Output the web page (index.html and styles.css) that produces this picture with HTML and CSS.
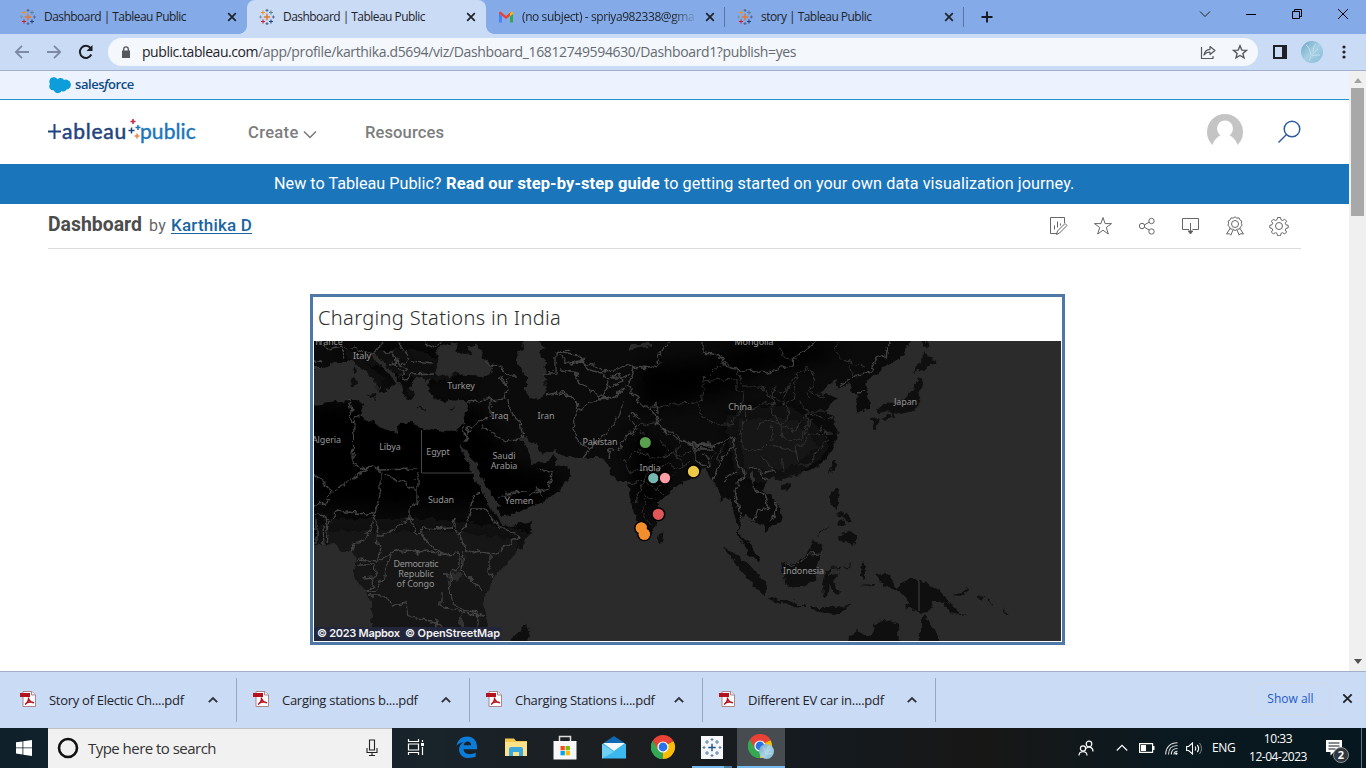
FILE: index.html
```
<!DOCTYPE html>
<html lang="en">
<head>
<meta charset="utf-8">
<title>Dashboard | Tableau Public</title>
<link rel="stylesheet" href="styles.css">
</head>
<body>
<svg class="defs" width="0" height="0">
  <defs>
    <symbol id="tableau" viewBox="0 0 16 16">
      <g fill="none" stroke-width="1.1">
        <path stroke="#e8762d" stroke-width="1.5" d="M8 4.8v6.4M4.8 8h6.4"/>
        <path stroke="#eb912c" d="M4 1.5v4M2 3.5h4"/>
        <path stroke="#59879b" d="M12 1.5v4M10 3.5h4"/>
        <path stroke="#c72035" d="M4 10.5v4M2 12.5h4"/>
        <path stroke="#1f457e" d="M12 10.5v4M10 12.5h4"/>
        <path stroke="#5b6591" d="M8 0v2.8M6.6 1.4h2.8M8 13.2V16M6.6 14.6h2.8M14.4 6.6v2.8M13 8h2.8"/>
        <path stroke="#7099a6" d="M1.5 6.6v2.8M.2 8H3"/>
      </g>
    </symbol>
    <symbol id="cross" viewBox="0 0 10 10"><path d="M1.2 1.2l7.6 7.6M8.8 1.2L1.2 8.8" fill="none" stroke="#1f2328" stroke-width="1.7"/></symbol>
    <symbol id="up" viewBox="0 0 12 8"><path d="M1.8 6.2L6 2l4.200 4.200" fill="none" stroke="#30343a" stroke-width="1.9"/></symbol>
    <symbol id="pdf" viewBox="0 0 16 16">
      <path d="M3 .5h9L15.500 4v11.500H3z" fill="#fff" stroke="#a8868a"/>
      <path d="M11.500.5V4h4" fill="#eee" stroke="#a8868a"/>
      <path d="M0 2h10v4H0z" fill="#b5121f"/>
      <path d="M8.500 6.500c.3 3-1.200 5.500-3.500 7M8.500 7.500c1 2.500 3 4 5.500 4.300M6.500 11.700c2-.8 4-1 6.500-.4" fill="none" stroke="#b5121f" stroke-width="1.400"/>
    </symbol>
    <symbol id="chrome" viewBox="0 0 24 24">
      <path d="M12 12L1.600 6A12 12 0 0 1 22.400 6z" fill="#ea4335"/>
      <path d="M12 12L1.600 6A12 12 0 0 0 12 24z" fill="#34a853"/>
      <path d="M12 12L22.400 6A12 12 0 0 1 12 24z" fill="#fbbc05"/>
      <path d="M12 6.500h10.700L22.400 6H12zM7.200 14.800L1.600 6l5.100 3z" fill="#ea4335"/>
      <path d="M16.800 14.800L12 24l-1.500-.1 1.800-6.400z" fill="#fbbc05"/>
      <path d="M1.600 6l5.200 9 5.200 2.500L12 24A12 12 0 0 1 1.600 6z" fill="#34a853"/>
      <circle cx="12" cy="12" r="5.600" fill="#fff"/><circle cx="12" cy="12" r="4.400" fill="#2b72e6"/>
    </symbol>
    <linearGradient id="ice" x1="0" y1="0" x2="1" y2="1"><stop offset="0" stop-color="#6da5c5"/><stop offset=".5" stop-color="#a5cfe2"/><stop offset="1" stop-color="#86bdd8"/></linearGradient>
    <symbol id="avatar" viewBox="0 0 22 22"><circle cx="11" cy="11" r="11" fill="url(#ice)"/><path d="M8 20c2-6 4-8 9-12M10 14C9 9 8 6 5 4M12 11c0-4 1-6 3-8M11 15c3-1 5-1 8-1" fill="none" stroke="#c3e1ee" stroke-width="1"/></symbol>
  </defs>
</svg>

<header class="tabs">
  <div class="tab"><svg class="fav"><use href="#tableau"/></svg><span class="tab-title">Dashboard | Tableau Public</span><svg class="close"><use href="#cross"/></svg></div>
  <div class="tab active"><svg class="fav"><use href="#tableau"/></svg><span class="tab-title">Dashboard | Tableau Public</span><svg class="close"><use href="#cross"/></svg></div>
  <div class="tab sep"><svg class="fav" viewBox="0 0 16 16"><path d="M1 3.500v10h3V6.500z" fill="#4285f4"/><path d="M12 6.500v7h3v-10z" fill="#34a853"/><path d="M1 3.500L2.500 2.500 8 7l5.500-4.500L12 6.800 8 10 1 4.500z" fill="#ea4335"/><path d="M12 4l2-1.500 1 1V5l-3 2.300z" fill="#fbbc04"/></svg><span class="tab-title mail">(no subject) - spriya982338@gma</span><svg class="close"><use href="#cross"/></svg></div>
  <div class="tab sep"><svg class="fav"><use href="#tableau"/></svg><span class="tab-title">story | Tableau Public</span><svg class="close"><use href="#cross"/></svg></div>
  <svg class="plus" viewBox="0 0 12 12"><path d="M6 .5v11M.5 6h11" stroke="#16191d" stroke-width="1.900"/></svg>
  <div class="win">
    <svg viewBox="0 0 12 12"><path d="M1 3.500L6 8.500l5-5" fill="none" stroke="#222"/></svg>
    <svg viewBox="0 0 12 12"><path d="M1 6.500h10" stroke="#000"/></svg>
    <svg viewBox="0 0 12 12"><path d="M1.500 3.500h7v7h-7zM3.500 3.500v-2h7v7h-2" fill="none" stroke="#000"/></svg>
    <svg viewBox="0 0 12 12"><path d="M1 1l10 10M11 1L1 11" stroke="#000"/></svg>
  </div>
</header>

<div class="toolbar">
  <svg class="nav" viewBox="0 0 16 16"><path d="M15 8H2M8 1.800L1.800 8 8 14.200" fill="none" stroke="#7c8aa3" stroke-width="1.800"/></svg>
  <svg class="nav" viewBox="0 0 16 16"><path d="M1 8h13M8 1.800L14.200 8 8 14.200" fill="none" stroke="#7c8aa3" stroke-width="1.800"/></svg>
  <svg class="nav" viewBox="0 0 16 16"><path d="M13.300 10.500A6 6 0 1 1 12.500 4" fill="none" stroke="#1b1e22" stroke-width="2"/><path d="M14.500 1v6h-6z" fill="#1b1e22"/></svg>
  <div class="omnibox">
    <svg class="lock" viewBox="0 0 10 12"><path d="M1 4.500h8V12H1z" fill="#55585c"/><path d="M2.700 5V3.200a2.300 2.300 0 0 1 4.600 0V5" fill="none" stroke="#55585c" stroke-width="1.300"/></svg>
    <span class="url"><b>public.tableau.com</b>/app/profile/karthika.d5694/viz/Dashboard_16812749594630/Dashboard1?publish=yes</span>
    <svg class="act" viewBox="0 0 16 16"><path d="M1.500 3v11.500H13V12" fill="none" stroke="#55585c" stroke-width="1.200"/><path d="M4 11c.5-4 3-5.500 6-5.700V2.500L15 6.500l-5 4V8C7.500 8 5.500 9 4 11z" fill="none" stroke="#55585c" stroke-width="1.200" stroke-linejoin="round"/></svg>
    <svg class="act" viewBox="0 0 16 16"><path d="M8 1.800l1.800 4.300 4.600.3-3.500 3 1.100 4.500L8 11.500l-4 2.400 1.100-4.500-3.500-3 4.600-.3z" fill="none" stroke="#55585c" stroke-width="1.400"/></svg>
  </div>
  <svg class="panel" viewBox="0 0 14 14"><path d="M1 1h12v12H1z" fill="none" stroke="#202124" stroke-width="2"/><path d="M9 0h5v14H9z" fill="#202124"/></svg>
  <svg class="me"><use href="#avatar"/></svg>
  <svg class="dots" viewBox="0 0 4 14"><path d="M2 2h0M2 7h0M2 12h0" stroke="#202124" stroke-width="3.200" stroke-linecap="round"/></svg>
</div>

<div class="view">
<main class="page">
  <div class="sf">
    <svg class="cloud" viewBox="0 0 24 16"><path d="M9.500 2.200A4.300 4.300 0 0 1 16 3a5 5 0 1 1 2.500 9.600 3.800 3.800 0 0 1-5 1.300 4.200 4.200 0 0 1-7.700-.6A4 4 0 0 1 2 7 4.300 4.300 0 0 1 9.500 2.200z" fill="#0d9dda"/></svg>
    <span>sales<i>f</i>orce</span>
  </div>
  <nav class="top">
    <div class="logo"><span class="w1"><svg class="tee" viewBox="0 0 14 18"><path d="M6.500 2v15M0 9.500h13" stroke="#1f447e" stroke-width="2"/></svg>ableau</span><svg class="plusses" viewBox="0 0 16 26"><path d="M7 1v5M4.500 3.500h5" stroke="#c8243b" stroke-width="1.500"/><path d="M12 7v5M9.500 9.500h5" stroke="#1b75bb" stroke-width="1.500"/><path d="M5.500 9.500v6M2.500 12.500h6" stroke="#1f447e" stroke-width="1.500"/><path d="M11 15.500v5M8.500 18h5" stroke="#e8894b" stroke-width="1.500"/></svg><span class="w2">public</span></div>
    <span class="link create">Create</span><svg class="caret" viewBox="0 0 14 9"><path d="M1 1.500l6 6 6-6" fill="none" stroke="#777" stroke-width="1.500"/></svg>
    <span class="link res">Resources</span>
    <svg class="person" viewBox="0 0 36 36"><clipPath id="pc"><path d="M0 0h36v31H0z"/></clipPath><circle cx="18" cy="18" r="18" fill="#c4c4c4" clip-path="url(#pc)"/><circle cx="18" cy="14.500" r="8" fill="#fff"/><path d="M5 32c2-6 5-9 9-11h8c4 2 7 5 9 11z" fill="#fff"/></svg>
    <svg class="search" viewBox="0 0 24 24"><circle cx="15" cy="9" r="7.800" fill="none" stroke="#2f5c9e" stroke-width="1.500"/><path d="M9.500 14.500L1.500 22.500" stroke="#2f5c9e" stroke-width="1.500"/></svg>
  </nav>
  <div class="banner"><span class="b1">New to Tableau Public?</span><b>Read our step-by-step guide</b><span class="b2">to getting started on your own data visualization journey.</span></div>
  <div class="titlebar">
    <h1>Dashboard</h1><span class="by">by</span><a>Karthika D</a>
    <div class="icons">
      <svg viewBox="0 0 20 20"><path d="M8 17.500H1.500v-16h14V7M5.500 13.500v-4M8.500 11.500v-6M11.500 9.500v-2M7.500 18.500l1-3.500L16 7.500l2 2L10.500 17z"/></svg>
      <svg viewBox="0 0 20 20"><path d="M10 1.500l2.100 6.100h6.400l-5.200 3.900 2 6.500L10 14.200 4.700 18l2-6.500-5.200-3.900h6.400z"/></svg>
      <svg viewBox="0 0 20 20"><circle cx="5" cy="10" r="2.700"/><circle cx="14.500" cy="5" r="2.700"/><circle cx="14.500" cy="15.500" r="2.700"/><path d="M7.500 8.800l4.700-2.600M7.500 11.300l4.700 2.800"/></svg>
      <svg viewBox="0 0 20 20"><path d="M8 13.500H1.500v-11h16v11h-6M9.500 7v10"/><path d="M7.200 15h4.600L9.500 18z" fill="#555"/></svg>
      <svg viewBox="0 0 20 20"><circle cx="10" cy="8" r="3.500"/><path d="M10 .8l1.800 1.300 2.200-.2.900 2 1.900 1.200-.4 2.200.7 2.100-1.700 1.500-.7 2.100-2.200.2L10 14.500l-2.500-1.300-2.200-.2-.7-2.100-1.700-1.500.7-2.100-.4-2.200 1.900-1.200.9-2 2.200.2zM5 12.500L1.500 18l3-.3 1.300 1.500L8 14M15 12.500l3.500 5.500-3-.3-1.300 1.500L12 14"/></svg>
      <svg viewBox="0 0 20 20"><circle cx="10" cy="10" r="3.500"/><path d="M8.500 1.500h3l.5 2.300 1.600.7 2-1.300 2 2-1.300 2 .7 1.600 2.200.5v2.600l-2.200.5-.7 1.600 1.300 2-2 2-2-1.300-1.600.7-.5 2.300h-3L8 17.400l-1.600-.7-2 1.300-2-2 1.300-2L3 12.400l-2.200-.5V9.300L3 8.800l.7-1.600-1.300-2 2-2 2 1.300L8 3.800z"/></svg>
    </div>
  </div>

  <section class="viz">
    <h2>Charging Stations in India</h2>
    <svg class="map" viewBox="314 341 747 300">
      <defs><filter id="soft" x="-30%" y="-30%" width="160%" height="160%"><feGaussianBlur stdDeviation="9"/></filter>
      <filter id="rough" filterUnits="userSpaceOnUse" x="300" y="325" width="780" height="335" color-interpolation-filters="sRGB"><feTurbulence type="fractalNoise" baseFrequency=".13" numOctaves="3" seed="4" result="n"/><feDisplacementMap in="SourceGraphic" in2="n" scale="8" xChannelSelector="R" yChannelSelector="G"/></filter>
      <path id="mainland" d="M300 325H915L909 341 905 352 893 364 882 367 878 372 869 378 865 384 868 393 869 408 857 413 856 404 858 396 852 393 851 387 847 384 838 389 835 383 837 379 833 380 823 391 819 393 823 396 828 393 838 399 831 403 825 410 831 415 837 427 838 437 833 447 827 458 817 467 807 472 790 477 783 480 768 477 764 483 763 491 771 496 777 503 783 517 779 523 770 528 764 533 764 526 757 523 753 521 752 516 745 514 740 520 738 531 743 540 753 547 760 562 757 563 752 558 747 554 744 543 737 535 737 520 735 513 731 499 726 498 720 501 719 492 714 482 709 475 703 467 698 473 692 478 685 482 673 490 663 498 658 503 658 512 655 527 648 535 642 527 635 513 630 497 627 482 620 483 612 474 608 465 600 458 578 458 560 456 556 449 543 454 538 445 530 442 527 436 521 439 529 455 532 463 548 462 554 455 558 465 569 469 571 476 560 491 545 500 517 512 502 517 497 504 487 488 476 462 466 450 461 446 462 439 459 449 453 437 458 447 466 458 473 477 479 485 490 507 500 522 505 526 533 521 531 530 524 544 510 561 496 574 490 585 482 603 488 617 485 660H370L370 641 373 617 372 603 362 588 353 573 356 560 352 551 342 551 336 544 300 545z"/>
      <clipPath id="land"><use href="#mainland"/></clipPath></defs>
      <path d="M314 341h748v301H314z" fill="#2b2b2b"/>
      <g filter="url(#rough)">
      <use href="#mainland" fill="#0b0b0b"/>
      <g clip-path="url(#land)"><g filter="url(#soft)">
        <path d="M300 405h174l40 60 50 10-30 40-60-10-90 5-84-5z" fill="#000"/>
        <path d="M640 365l80-5 60 0-60 35-80 15zM700 350l90-10 60 10-60 20z" fill="#000"/>
        <path d="M320 525l120 0 90 10-50 125H340z" fill="#131313"/>
        <path d="M730 415l60-5 40 35-40 30-50 0z" fill="#131313"/>
        <path d="M320 350h100l60 30h-60z" fill="#111"/>
        <path d="M630 430l40 20-10 60-25-10z" fill="#000"/>
      </g></g>
      <g fill="#2b2b2b">
        <path d="M300 375L322 367 335 363 345 363 353 358 359 361 366 373 377 381 381 388 378 392 384 394 387 388 396 384 393 378 386 371 378 364 370 353 374 352 382 361 398 377 402 390 407 400 412 397 409 388 415 378 421 377 432 380 427 385 429 393 436 399 443 402 450 401 458 400 465 400 467 406 464 421 460 429 450 432 430 429 420 427 412 423 400 424 396 433 382 427 366 420 360 411 363 404 357 400 347 400 330 403 300 406z"/>
        <path d="M439 363L436 355 442 345 452 341 458 344 456 350 464 356 472 352 468 347 478 343 478 348 484 357 491 364 493 372 485 376 468 375 455 374 440 377 434 371z"/>
        <path d="M522 341H542L545 349 539 352 540 358 546 361 545 378 546 391 540 400 531 398 526 391 526 377 519 366 517 356 523 349z"/>
        <path d="M448 574l11-3 3 5-6 6h-7zM630 345l10-1 12 0v2l-12 1-9 4z"/>
      </g>
      <g fill="#0f0f0f">
        <path d="M344 352h18l4 9 9 10 12 7-1 2-6-2 1 8-4 4-1-10-10-6-10-11-6-5zM366 395l11-1-2 5zM351 379l4-2 1 8-4 3zM353 369l2-2 1 6-3 1zM417 408l9 0v2l-9-1zM449 409l7-2-4 4zM407 388l7 2-2 7-5-4z"/>
        <path d="M527 623l-7 7-9 9-1 13h18l2-20zM658 533l4-2 3 6-1 6-5 1-2-4z"/>
        <path d="M923 352l6 6 9 4-8 2-5 7-7-1-4 5 2-10 6-2zM915 380l4-3 4 7-3 10-2 6 1 8-6 1-8 3-9 2-2 5-3-2 2-4-8-1-7 2-3-3 9-6 12-2 7-2 5-7 7-5zM872 418l7-1-1 5-2 7-3-1 1-6zM883 417l7-2-1 3-5 3zM923 341h6v4l-6 1zM782 485l8-2-2 6-6 2z"/>
        <path d="M833 462l4-3-1 7-4 6-2-4zM831 491l7-1 1 7-2 4v9l-3-1-4-9zM836 514l4-3 7 4 4 6-4 0-4-5zM837 522l6-3 3 6-2 4-6-2zM838 537l5-2 6-4 7 4v9l-5 1-5-4-7 1z"/>
        <path d="M723 548l7 1 12 11 12 10 10 12 3 4v9l-5-1-8-8-10-12zM768 597l12 3 11 0 9 5 6 0 0 2-14-1-13-3-9-2zM782 562l6 3 9-3 8-7 10-14 7 3 1 6-4 10-3 18-12 9-10 0-9-4zM826 569l5 0 17-2 3-3-1 4-20 2-1 5 10-1-6 7 7 12-2 2-9-11-3 13-3 0-1-13zM861 565l3-2v16l-3-1zM876 574l9-1 6 3-1 5 7 6 11-7 11 0 11 6 12 5 5 7 10 14 8 4-12-2-10-11-9 0-5 8-10 1-14-4 5-5-9-11-12-6-5 1z"/>
        <path d="M845 660l4-23 9-6 9 4 4-1 5-10 11-4 13 4-2 9 4 27zM921 660v-40l4-6 4 9 9 12v25zM952 595l10-2 5-5 1 2-7 6zM812 607h20l20-1-15 8-10-1-15-4zM860 585l14-1v2zM818 533l10-8-9 10z"/>
        <path d="M979 596l4 2m5 3l6 4m8 4l6 6" fill="none" stroke="#111" stroke-width="1.500"/>
      </g>
      <g clip-path="url(#land)" class="borders">
        <path d="M349 400l3 8-3 8 5 7 3-5 6-4M354 423l-1 40 7 6 11-3 7 4 39-1M378 467l1 4 38 19M371 466l-38 26-19-17M381 471l0 20-6 22-10 1-8-1-20-2-7 8-3 23M417 474v28l-7 6 0 12 5 10 4 2 6-4 10 1 15-1 5-10 0 10 5 8M372 512l6 16-2 8 8 0 18-13 10-4M331 488l-3 16-14 1M304 513l22 3 2 16M316 520v24M323 525l1 20M376 516l-10 22-12 6-3 7M377 538l3 17-3 7-20-2M380 560l15-10 17 2 20-1 14 4 13-1 0 10-7 8-2 11 2 17 6 9 20 4v20M391 554l-5 20-10 16-13 2M370 596h15l6 9 15-3 2 15 13 3 20 4 6 4 2 12M419 532l14 16 13 6M459 535l8 15 5 3 8-2 15 4 24-19-20-10-8-8-4-8-15 0-9 20-6 8M490 555v16l3 7M463 552l-2 18 21 20M440 575h8M441 590l0 15 7 4 9 3 28 4M437 619l-1 22M461 615l0 27M470 508l4-13 7-2M357 565l17 0 2 12-15 1M374 577l-1 9-10 6"/>
        <path d="M304 368l16 0M314 361l10 2M318 341l12 9 12-3 1 12M345 350l10-3 15 6 8-4 5-8M382 352l11 0 3 14M396 341l6 6 8 12-10 5 8 6-8 6 7 5M411 362l22 2M407 381l6-7 20-1M425 341l8 8 8-8M390 363l8-2 4 4M396 368l8 4M485 363l15 4 10 9 6 0M500 377l5 10 4-8M467 402l20-2 18-1 2-10-5-13M491 400l0 16-22 12-4 12 4-2M480 425l12 9 14 7 16-1M508 399l1 13 11 9 3 17M463 421l2 20M546 395l15-3 9 3 8 11M543 373h12v-20l15-4M555 353l15 10 13-3 6 10 13 3 6 9-6 16M560 394l13 3 4 13 18-10 13-1 10-7 5 0M560 351l15 4 12 9 8 1 9 6 11-1 10-4 25 3 10-6-2-6 11-16M560 370l13 2 10 14 12 7 7 4M608 380l10-6 5 8-14 4M612 378l12 0 6-4M610 384l-4 6M635 368l-5 14-4 4 13 16 15 10 2 10 12 12 20 9 9 2 15 1 11-5 6-4 7 2-3 8-12 14-8 20M600 399l16-3 8-8M577 410l-4 20 6 14 12 4-8 10M591 448l17-16 12-17 3-15M608 458l2-10 8 3 7-12 10-13-5-10M630 412l12 8M650 408l6-4 1 8M656 422l8 8 10 3 19 14 15 2M693 449l1-5 15 0 4 6-18 0 0 10 13 7 2-9-8-3"/>
        <path d="M703 341v12l16 2 8 12 18 4 24 2 22-8 3-8 26-18M840 386l15-10 15-4 7-14 8-3 5-14M857 393l8-1M735 448l0 10 4 10 8 4-8 10-4 8 4 20 3 9M748 468l9-1 5 6 8-3 6 3M752 472l0 12 6 8 7 2 4 14-12 3-4 11M758 472l14 12 2 12 3 12-3 8-5 4M736 470l-12 10M528 497l10-5 10-3 4-16-12-4M538 487l3 10M498 497l9-4 18-2"/>
      </g>
      <g clip-path="url(#land)" class="states">
        <path d="M640 402l15 6 20-4 23-1 4 14 16 7 13 0 7-8 5-22-6-4 0-10-16-1-19 2 12-12 12-6 11 8 6 15 18 0 6 10 17 5 6 12-6 8-4 13 10 8 10-3 8-15-2-10 10 1 9 4 12-3M700 403l2-11 2-8M770 388l15 4 12-18 10-7 8 12-5 12 13 7M775 385l-4 25 10 16 13 5 10-13M797 376l-4 25-12 3M800 400l8 12 17 0M744 402l2 18-7 10 4 18M743 448l18 2 10-10 2-15M770 445l25 5 15-16 22-1M795 450l3 15 12 0 6-15 14-9M752 411l12-10 10 3M838 341l-3 10 11 10 6 16M846 361l20 6M780 347l5 11 14 2M755 430l10-12 14 6M785 392l-2 14M806 392l4 8M812 420l-8 16M782 456l2 16M762 455l10 14M820 425l8 14"/>
        <path d="M640 430l5 10-5 12 12 6 14-4 16 2 10-6M640 451l-17 8 7 15 10-5 16 3 12-9 10 6 15-9M628 484l16-4 5-14M644 480l10 9 14-6 8-10M644 480l-9 24M645 496l13 3M645 498l-3 15 10 12M654 488l10 7M662 420l-22 5-12 12M680 440l-4 14 6 12M660 440l8 12M717 450l-8 16M724 444l-6 18"/>
      </g>
      <path d="M784 565l7 1 10-4 7-8 14 -1" fill="none" stroke="#444"/>
      </g>
      <path d="M421.500 430v43h52M919 581v30" stroke="#444" fill="none"/>
      <path d="M314 627h188v15H314z" fill="#22263a"/>
      <g class="places">
        <text x="329" y="345">France</text><text x="362" y="358.500">Italy</text><text x="461" y="388.500">Turkey</text><text x="500" y="418.500">Iraq</text><text x="546" y="418.500">Iran</text><text x="326.500" y="443">Algeria</text><text x="390" y="450">Libya</text><text x="438" y="455">Egypt</text><text x="504" y="459">Saudi</text><text x="504" y="469">Arabia</text><text x="441" y="503">Sudan</text><text x="519" y="504">Yemen</text><text x="416" y="567" textLength="45">Democratic</text><text x="416" y="577">Republic</text><text x="415.500" y="587">of Congo</text><text x="754" y="345">Mongolia</text><text x="740" y="410">China</text><text x="600" y="445">Pakistan</text><text x="650" y="471">India</text><text x="803.500" y="574">Indonesia</text><text x="905.500" y="405">Japan</text>
      </g>
      <g stroke="#000" stroke-width="1.500">
        <circle cx="645.300" cy="442.500" r="6.300" fill="#59a14f"/><circle cx="653.300" cy="478.200" r="5.900" fill="#76b7b2"/><circle cx="665" cy="478" r="5.900" fill="#ff9da7"/><circle cx="693.500" cy="471.500" r="6.400" fill="#edc948"/><circle cx="658.300" cy="514.300" r="6.400" fill="#e15759"/><circle cx="641.300" cy="528" r="6.400" fill="#f28e2b"/><circle cx="644.300" cy="534.200" r="6.400" fill="#f28e2b"/></g>
      <g fill="#f28e2b"><circle cx="641.300" cy="528" r="5.600"/><circle cx="644.300" cy="534.200" r="5.600"/></g>
      <g class="credit"><text x="317" y="637" textLength="83">© 2023 Mapbox</text><text x="405" y="637" textLength="95">© OpenStreetMap</text></g>
    </svg>
  </section>
</main>
<aside class="scroll"><svg viewBox="0 0 8 5"><path d="M0 5l4-5 4 5z" fill="#a3a3a3"/></svg><div class="thumb"></div><svg class="down" viewBox="0 0 8 5"><path d="M0 0h8L4 5z" fill="#505050"/></svg></aside>
</div>

<footer class="downloads">
  <div class="dl"><svg class="pdf"><use href="#pdf"/></svg><span>Story of Electic Ch....pdf</span><svg class="up"><use href="#up"/></svg></div>
  <div class="dl"><svg class="pdf"><use href="#pdf"/></svg><span>Carging stations b....pdf</span><svg class="up"><use href="#up"/></svg></div>
  <div class="dl"><svg class="pdf"><use href="#pdf"/></svg><span>Charging Stations i....pdf</span><svg class="up"><use href="#up"/></svg></div>
  <div class="dl"><svg class="pdf"><use href="#pdf"/></svg><span>Different EV car in....pdf</span><svg class="up"><use href="#up"/></svg></div>
  <div class="showall">Show all</div>
  <svg class="dlclose"><use href="#cross"/></svg>
</footer>

<div class="taskbar">
  <div class="start"><svg viewBox="0 0 16 16"><path d="M0 2.300l6.500-.9v6.100H0zM7.300 1.300L16 0v7.500H7.300zM0 8.300h6.500v6.200L0 13.600zM7.300 8.300H16V16l-8.700-1.300z" fill="#fff"/></svg></div>
  <div class="find"><svg class="ring" viewBox="0 0 22 22"><circle cx="11" cy="11" r="9" fill="none" stroke="#111" stroke-width="2.600"/></svg><span>Type here to search</span><svg class="mic" viewBox="0 0 12 18"><path d="M3.500 1h5v10h-5zM1 9v4.500h10V9M6 13.500V17M3 16.500h6" fill="none" stroke="#222" stroke-width="1.100"/></svg></div>
  <div class="app view-btn"><svg width="18" height="16" viewBox="0 0 18 16"><path d="M1.500 0v2.500h10V0M1.500 5h10v6h-10zM1.500 16v-2.500h10V16M15.500 1v2M15.500 8v8" fill="none" stroke="#fff" stroke-width="1.200"/><path d="M14 4h3v3h-3z" fill="#fff"/></svg></div>
  <div class="app edge"><svg width="22" height="22" viewBox="0 0 22 22"><path d="M.5 10C1.500 3.500 6 .5 11 .5c6.500 0 10 4.800 10 10.200v2.500H7.500c.3 3.500 3 4.800 6 4.800 2.500 0 4.500-.6 6.200-1.600v4.200c-2 1-4.500 1.400-7 1.400-6 0-9.700-3.600-9.700-8.800C3 10 5 7.500 8 6 5 6.300 2.500 7.500.5 10zM7.700 9.200h7.500c0-2.500-1.400-3.800-3.500-3.800-2 0-3.600 1.400-4 3.800z" fill="#0b7cd8"/></svg></div>
  <div class="app"><svg width="22" height="20" viewBox="0 0 22 20"><path d="M0 1.500h9l2 2.500h11v14H0z" fill="#f3c94d"/><path d="M0 5h22v14H0z" fill="#fde28c"/><path d="M4 19v-7q0-2 2-2h10q2 0 2 2v7h-4v-4H8v4z" fill="#3ba9e0"/></svg></div>
  <div class="app"><svg width="24" height="25" viewBox="0 0 24 25"><path d="M6.500 7V1.500h11V7" fill="none" stroke="#ddd" stroke-width="1.500"/><path d="M.5 6h23v18.500H.5z" fill="#f7f7f7"/><path d="M7.500 11h4.300v4.300H7.500z" fill="#f25022"/><path d="M12.600 11h4.300v4.300h-4.300z" fill="#7fba00"/><path d="M7.500 16h4.300v4.300H7.500z" fill="#00a4ef"/><path d="M12.600 16h4.300v4.300h-4.300z" fill="#ffb900"/></svg></div>
  <div class="app"><svg width="24" height="23" viewBox="0 0 24 23"><path d="M0 8l12-8 12 8v4H0z" fill="#1067b2"/><path d="M0 8h24v14.500H0z" fill="#3bb8ee"/><path d="M1 7h22L12 15z" fill="#f4f6f8"/><path d="M0 8l12 8-12 6.500z" fill="#6fd0f4"/></svg></div>
  <div class="app"><svg width="24" height="24"><use href="#chrome"/></svg></div>
  <div class="app run"><svg width="22" height="23" viewBox="0 0 22 23"><path d="M0 0h22v23H0z" fill="#f5f7f9"/><g stroke="#5f83ad" fill="none" stroke-width="1.100"><path stroke="#24518a" stroke-width="1.400" d="M11 7.800v7.400M7.300 11.500h7.400"/><path d="M6 4v4M4 6h4M16 4v4M14 6h4M6 15v4M4 17h4M16 15v4M14 17h4M11 2v3M9.500 3.500h3M11 18v3M9.500 19.500h3M3 10v3M1.500 11.500h3M19 10v3M17.500 11.500h3"/></g></svg></div>
  <div class="app on"><svg width="26" height="26" viewBox="0 0 26 26"><use href="#chrome" width="24" height="24"/><use href="#avatar" x="11" y="10" width="15" height="15"/></svg></div>
  <div class="tray">
    <svg class="ppl" viewBox="0 0 16 16"><g fill="none" stroke="#fff" stroke-width="1.200"><circle cx="11" cy="4" r="2.800"/><circle cx="5" cy="8.500" r="2.600"/><path d="M1 15.500c0-5 8-5 8 0M8 8.500c3-3 7-1 7 3"/></g></svg>
    <svg class="chev" viewBox="0 0 12 8"><path d="M.8 6.500L6 1.300l5.200 5.200" fill="none" stroke="#fff" stroke-width="1.200"/></svg>
    <svg class="bat" viewBox="0 0 16 10"><path d="M.6.6h13v8.800H.6z" fill="none" stroke="#fff" stroke-width="1.200"/><path d="M2 2h5v6H2zM14 3h1.500v4H14z" fill="#fff"/></svg>
    <svg class="wifi" viewBox="0 0 13 13"><g fill="none" stroke="#ddd" stroke-width="1.100"><path d="M.7 12.500C.7 5 5.500.8 12.500.8M3.500 12.500c0-5.500 3-9 9-9M6.300 12.500c0-3.500 2-6 6.200-6M9 12.500c0-2 1-3.200 3.500-3.200"/></g><circle cx="11.300" cy="11.600" r="1.200" fill="#fff"/></svg>
    <svg class="snd" viewBox="0 0 17 13"><path d="M.6 4.500h2L6.500 1v11L2.600 8.500h-2zM9 4.500q1.500 2 0 4M11.200 2.800q2.800 3.700 0 7.400" fill="none" stroke="#fff" stroke-width="1.100"/><path d="M13.500 1q4 5.500 0 11" fill="none" stroke="#888"/></svg>
    <span class="eng">ENG</span>
    <div class="clock"><span>10:33</span><span>12-04-2023</span></div>
    <div class="note"><svg viewBox="0 0 16 16"><path d="M0 0h16v12H8l-3.500 3.500V12H0z" fill="#fff"/><path d="M2.500 3h11M2.500 6h11M2.500 9h7" stroke="#151b20"/></svg><b>2</b></div>
  </div>
</div>
</body>
</html>
```
FILE: styles.css
```
* { box-sizing: border-box; }
body { margin: 0; width: 1366px; height: 768px; overflow: hidden; display: flex; flex-direction: column; background: #fff; font-family: "Open Sans", "Noto Sans", sans-serif; color: #1f2328; }
svg { display: block; flex: none; }
span, b, a { white-space: nowrap; }
.defs { position: absolute; }

/* browser chrome */
.tabs { height: 34px; flex: none; display: flex; align-items: center; background: #84abe8; padding-left: 8px; }
.tab { width: 239px; height: 34px; display: flex; align-items: center; padding: 0 10px 0 12px; position: relative; }
.active { background: #cadbf6; border-radius: 8px 8px 0 0; }
.active::before, .active::after { content: ""; position: absolute; bottom: 0; width: 8px; height: 8px; }
.active::before { left: -8px; background: radial-gradient(circle at 0 0, transparent 7.5px, #cadbf6 8px); }
.active::after { right: -8px; background: radial-gradient(circle at 100% 0, transparent 7.5px, #cadbf6 8px); }
.sep::after { content: ""; position: absolute; right: 0; top: 7px; width: 1px; height: 20px; background: #5b76a3; }
.fav { width: 16px; height: 16px; margin-right: 8px; }
.tab-title { font-size: 12px; letter-spacing: -.54px; flex: 1; margin-top: -1px; }
.mail { letter-spacing: -.41px; flex: none; width: 176px; margin-right: 7px; -webkit-mask-image: linear-gradient(90deg, #000 150px, transparent 176px); mask-image: linear-gradient(90deg, #000 150px, transparent 176px); }
.close { width: 10px; height: 10px; }
.tab > .close { margin-left: auto; }
.plus { width: 12px; height: 12px; margin-left: 17px; }
.win { margin-left: auto; display: flex; gap: 34px; padding-right: 17px; margin-top: -6px; }
.win svg { width: 12px; height: 12px; }
.toolbar { height: 37px; flex: none; display: flex; align-items: center; background: #cadbf6; border-bottom: 1px solid #a3afca; padding: 0 20px 0 14px; }
.nav { width: 16px; height: 16px; margin-right: 16px; }
.omnibox { width: 1150px; height: 28px; margin-left: -2px; border-radius: 14px; background: #f4f8fd; display: flex; align-items: center; padding-left: 13px; }
.lock { width: 10px; height: 12px; margin-right: 11px; }
.url { font-size: 14px; letter-spacing: -.364px; color: #666a70; margin: -1px auto 0 0; }
.url b { font-weight: 400; color: #1f2328; letter-spacing: -.446px; }
.act { width: 16px; height: 16px; margin-right: 16px; }
.act + .act { margin-right: 10px; }
.panel { width: 14px; height: 14px; margin-left: 15px; }
.me { width: 22px; height: 22px; margin-left: 14px; }
.dots { width: 4px; height: 14px; margin-left: auto; }

/* page */
.view { height: 600px; flex: none; display: flex; }
.page { width: 1349px; font-family: Roboto, "Liberation Sans", sans-serif; }
.sf { height: 29px; background: #ecf3fe; border-bottom: 1px solid #1f95c9; display: flex; align-items: center; padding: 0 0 0 48px; color: #0b4a86; font: 600 13px "Open Sans", sans-serif; letter-spacing: -.45px; }
.sf span { line-height: 16px; margin-top: -2px; }
.cloud { width: 24px; height: 16px; margin-right: 3px; }
.top { height: 64px; display: flex; align-items: center; padding: 0 48px; color: #7d7d7d; }
.logo { display: flex; align-items: center; width: 149px; font: 400 21px/26px Lato, sans-serif; padding-bottom: 2px; }
.w1 { display: flex; align-items: center; color: #1f447e; width: 78px; letter-spacing: .75px; -webkit-text-stroke: .5px #1f447e; }
.tee { width: 14px; height: 18px; }
.plusses { width: 16px; height: 26px; margin-right: -2px; }
.w2 { color: #1b75bb; letter-spacing: .1px; -webkit-text-stroke: .4px #1b75bb; }
.link { font-size: 16.6px; font-weight: 500; }
.create { margin-left: 51px; letter-spacing: .3px; width: 55px; }
.caret { width: 14px; height: 9px; margin-top: 4px; }
.res { margin-left: 48px; letter-spacing: .08px; }
.person { width: 36px; height: 36px; margin-left: auto; }
.search { width: 24px; height: 24px; margin-left: 34px; }
.banner { height: 40px; background: #1b75bb; color: #fff; font-size: 16.2px; display: flex; align-items: center; gap: 4px; padding: 0 0 1px 274px; }
.b1 { width: 168px; }
.banner b { width: 214px; font-size: 16.5px; letter-spacing: .11px; }
.b2 { letter-spacing: .08px; }
.titlebar { height: 45px; margin: 0 48px; width: 1253px; display: flex; align-items: center; border-bottom: 1px solid #dcdcdc; padding-bottom: 3px; }
h1 { margin: 0; width: 101px; font-size: 19.4px; letter-spacing: 0; color: #4c4c4c; }
.by { width: 22px; font-size: 16px; color: #666; letter-spacing: .26px; margin-top: 1px; }
.titlebar a { font-size: 17px; font-weight: 500; letter-spacing: .2px; color: #1a659f; text-decoration: underline; text-decoration-thickness: 1px; text-underline-offset: 2px; margin-top: 1px; }
.icons { margin: 3px 12px 0 auto; display: flex; gap: 24px; }
.icons svg { width: 20px; height: 20px; fill: none; stroke: #666; stroke-width: 1; }
.viz { width: 755px; height: 351px; margin: 45px 0 0 310px; border: 3px solid #4e79a7; padding-left: 1px; background: #fff; }
h2 { margin: 0; height: 44px; padding: 0 0 2px 4px; font: 300 20px/42px "Noto Sans", "Open Sans", sans-serif; letter-spacing: .35px; color: #2c2c2c; }
.map { width: 747px; height: 300px; }
.borders { fill: none; stroke: #444; stroke-width: 1.3; stroke-linejoin: round; }
.states { fill: none; stroke: #363636; stroke-width: .9; stroke-linejoin: round; }
.places { font: 9px/1 "Noto Sans", sans-serif; letter-spacing: -.1px; text-anchor: middle; fill: #959595; }
.credit { font: 600 11px Inter, sans-serif; fill: #f2f2f2; }
.scroll { width: 17px; background: #f0f0f0; display: flex; flex-direction: column; align-items: center; padding: 7px 0 7px; }
.scroll svg { width: 8px; height: 5px; }
.thumb { width: 13px; height: 128px; background: #a8a8a8; margin-top: 5px; }
.down { margin-top: auto; }

/* download shelf */
.downloads { height: 57px; flex: none; background: #cadbf6; border-top: 1px solid #a3afca; display: flex; align-items: center; padding: 0 13px 0 4px; }
.dl { width: 233px; height: 44px; border-right: 1px solid #98a7c3; display: flex; align-items: center; padding: 0 17px 0 16px; font-size: 13px; letter-spacing: -.28px; }
.pdf { width: 16px; height: 16px; margin-right: 13px; margin-top: -2px; }
.up { width: 12px; height: 8px; margin-left: auto; }
.showall { margin-left: auto; width: 77px; height: 32px; border: 1px solid #d2d9e6; border-radius: 4px; text-align: center; font-size: 12px; line-height: 29px; color: #1f5cc6; margin-right: 13px; margin-top: -2px; }
.dlclose { width: 11px; height: 11px; margin-top: -3px; }

/* taskbar */
.taskbar { height: 40px; flex: none; display: flex; align-items: stretch; background: linear-gradient(90deg, #10202b 0, #18232a 32%, #1c1e20 45%, #141a1f 60%, #181716 72%, #0b1920 85%, #06171f 100%); color: #fff; }
.start { width: 48px; display: flex; align-items: center; justify-content: center; }
.start svg { width: 16px; height: 16px; }
.find { width: 344px; background: #f1f1f1; border-top: 1px solid #c0c0c0; display: flex; align-items: center; color: #333; padding: 0 14px 1px 9px; font-size: 15px; letter-spacing: -.53px; }
.ring { width: 22px; height: 22px; margin-right: 9px; }
.mic { width: 12px; height: 18px; margin-left: auto; }
.app { width: 49px; display: flex; align-items: center; justify-content: center; border-bottom: 2px solid transparent; }
.view-btn { width: 48px; }
.edge { margin-left: 2px; }
.run { background: linear-gradient(90deg, #76b9ed 32px, #4d7da3 32px) 5px 38px / 40px 2px no-repeat; border: 0; padding-bottom: 1px; }
.on { width: 48px; background: #474c50; border-color: #76b9ed; margin-left: 1px; }
.tray { margin-left: auto; display: flex; align-items: center; font-size: 12px; }
.ppl { width: 16px; height: 16px; margin-right: 22px; }
.chev { width: 12px; height: 8px; margin-right: 11px; }
.bat { width: 16px; height: 10px; margin-right: 10px; }
.wifi { width: 13px; height: 13px; margin-right: 8px; }
.snd { width: 17px; height: 13px; margin-right: 9px; }
.eng { letter-spacing: -.4px; width: 37px; margin-top: -1px; }
.clock { display: flex; flex-direction: column; align-items: center; line-height: 18px; letter-spacing: -.46px; width: 58px; margin: -1px 19px 0 0; }
.note { position: relative; width: 36px; height: 40px; border-right: 1px solid #66717a; margin-right: 4px; padding-top: 12px; }
.note svg { width: 16px; height: 16px; }
.note b { position: absolute; left: 7px; top: 19px; width: 16px; height: 16px; border-radius: 50%; background: #32383d; border: 1px solid #8c9195; font-size: 11px; line-height: 14px; text-align: center; }
```
